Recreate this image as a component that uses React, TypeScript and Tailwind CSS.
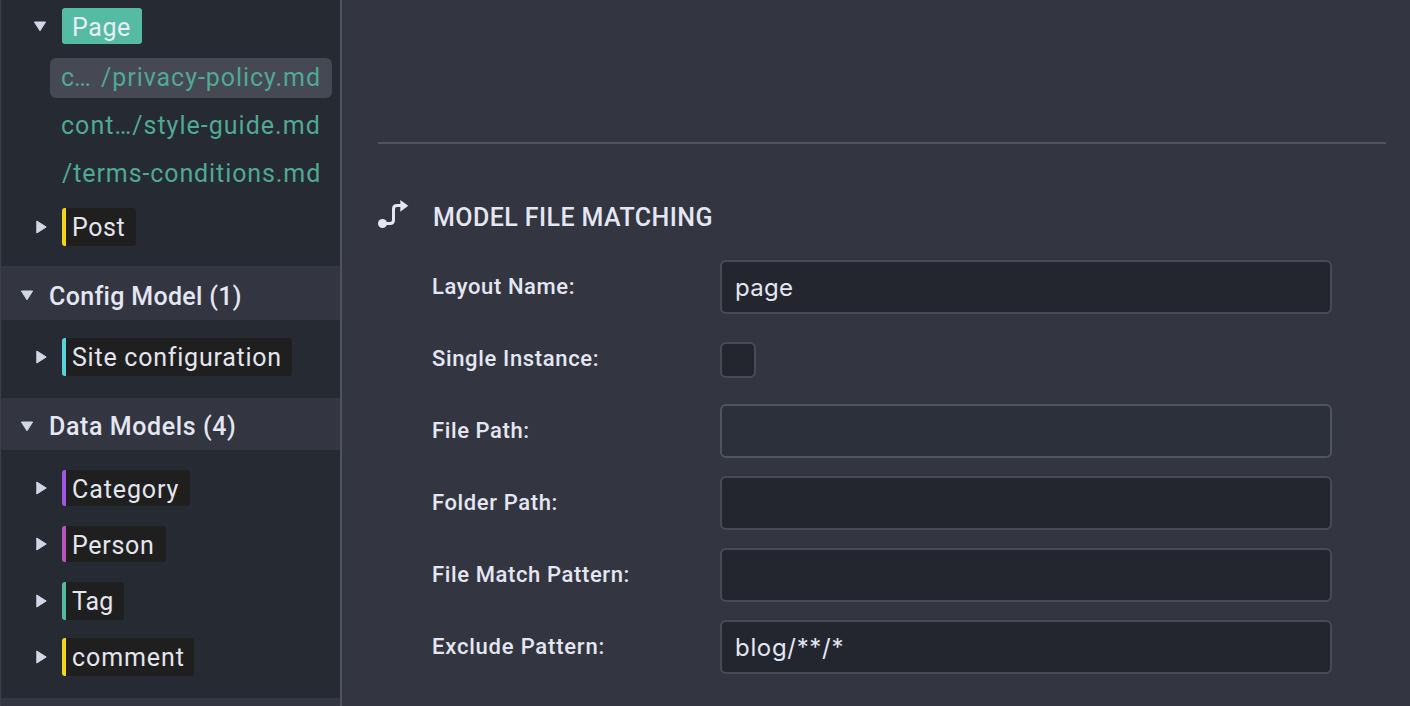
import React from "react";

function Arrow({ open = false }: { open?: boolean }) {
  return open ? (
    <svg width="14" height="11" viewBox="0 0 14 11" className="shrink-0">
      <path d="M1.4 1h11.2L7 9.8z" fill="#d3d7e5" stroke="#d3d7e5" strokeWidth="1" strokeLinejoin="round" />
    </svg>
  ) : (
    <svg width="11" height="14" viewBox="0 0 11 14" className="shrink-0">
      <path d="M.8 1v12L10.2 7z" fill="#d3d7e5" stroke="#d3d7e5" strokeWidth="1" strokeLinejoin="round" />
    </svg>
  );
}

function Chip({ label, className }: { label: string; className: string }) {
  return (
    <div className="flex items-center pl-[35px]">
      <div className="-mt-px w-[26px]">
        <Arrow />
      </div>
      <span className={`box-border block rounded-[3px] border-l-4 bg-[#1f1f1f] pl-1.5 text-[25px] whitespace-nowrap text-[#e4e6ef] ${className}`}>
        {label}
      </span>
    </div>
  );
}

function Group({ label, className, textClass }: { label: string; className: string; textClass: string }) {
  return (
    <div className={`flex items-center bg-[#333540] pl-[19px] font-medium text-[#e4e7f3] ${className}`}>
      <div className="w-[29px] pt-1">
        <Arrow open />
      </div>
      <span className={`text-[25px] leading-[30px] ${textClass}`}>{label}</span>
    </div>
  );
}

function Field({ label, labelClass, inputClass, value = "" }: { label: string; labelClass: string; inputClass: string; value?: string }) {
  return (
    <div className="flex h-[54px] items-center">
      <label className={`w-[288px] text-[22px] leading-7 font-medium whitespace-nowrap ${labelClass}`}>{label}</label>
      <div className={`flex h-[54px] w-[612px] items-center rounded-md border-2 pt-0.5 pl-[13px] font-[Inter] text-2xl text-[#e4e7f3] ${inputClass}`}>
        {value}
      </div>
    </div>
  );
}

export default function App() {
  return (
    <div className="flex h-[706px] w-[1410px] overflow-hidden bg-[#333540] font-[Roboto,sans-serif]">
      <aside className="w-[342px] shrink-0 border-r-2 border-l border-r-[#50535f] border-l-[#3b3e48] bg-[#262a33]">
        <div className="mt-2 flex h-9 items-center pl-8">
          <div className="w-[29px]">
            <Arrow open />
          </div>
          <span className="h-9 w-20 rounded-[3px] bg-[#55bba3] pt-0.5 pl-2.5 text-[25px] leading-9 tracking-[0.6px] text-[#e8edf7]">Page</span>
        </div>

        <div className="mt-3.5 mb-[11px] ml-[49px] w-[282px] text-[25px] whitespace-nowrap text-[#4fa994]">
          <div className="flex h-10 justify-between rounded-md bg-[#464853] pr-[11px] pl-[11px] leading-[39px]">
            <span className="tracking-[-0.2px]">c…</span>
            <span className="tracking-[0.95px]">/privacy-policy.md</span>
          </div>
          <div className="mt-2 h-10 pl-[11px] leading-[39px] tracking-[1.02px]">cont…/style-guide.md</div>
          <div className="mt-2 h-10 pl-3 leading-[39px] tracking-[0.9px]">/terms-conditions.md</div>
        </div>

        <div className="h-[61px] pt-[3px]">
          <Chip label="Post" className="h-[38px] w-[74px] border-[#f5d517] leading-[39px] tracking-[0.6px]" />
        </div>

        <Group label="Config Model (1)" className="h-[54px]" textClass="pt-[7px] tracking-[0.32px]" />
        <div className="h-[78px] pt-[18px]">
          <Chip label="Site configuration" className="h-[38px] w-[230px] border-[#56d3dc] leading-[39px] tracking-[0.76px]" />
        </div>

        <Group label="Data Models (4)" className="h-[52px]" textClass="pt-1.5 tracking-[0.6px]" />
        <div className="flex h-[248px] flex-col pt-5">
          <div className="h-14">
            <Chip label="Category" className="h-9 w-32 border-[#a056e3] pt-0.5 leading-9 tracking-[0.9px]" />
          </div>
          <div className="h-14">
            <Chip label="Person" className="h-9 w-[104px] border-[#b954be] pt-0.5 leading-9 tracking-[0.7px]" />
          </div>
          <div className="h-14">
            <Chip label="Tag" className="h-[38px] w-[62px] border-[#55bba0] leading-[39px]" />
          </div>
          <Chip label="comment" className="h-[38px] w-[132px] border-[#f5d517] leading-[39px] tracking-[0.9px]" />
        </div>
        <div className="h-2 bg-[#333540]" />
      </aside>

      <main className="flex-1 pt-[142px] pr-6 pl-9 text-[#e4e7f3]">
        <div className="h-0.5 bg-[#50535f]" />
        <div className="flex h-[90px] items-end">
          <svg width="31" height="30" viewBox="0 0 31 30" className="mb-1 shrink-0">
            <circle cx="4.5" cy="23.5" r="4.5" fill="#e4e7f3" />
            <path d="M4.5 23.5H12q3.5 0 3.5-3.5V9q0-3.5 3.5-3.5h5" fill="none" stroke="#e4e7f3" strokeWidth="3" />
            <path d="M22.3 0v11.7L30.3 5.8z" fill="#e4e7f3" />
          </svg>
          <h2 className="ml-6 text-[25px] leading-[32px] font-medium tracking-[0.42px] whitespace-nowrap">MODEL FILE MATCHING</h2>
        </div>
        <div className="mt-[26px] ml-[54px] flex flex-col gap-[18px]">
          <Field label="Layout Name:" labelClass="tracking-[0.6px]" inputClass="border-[#484b55] bg-[#23262f] tracking-[0.3px]" value="page" />
          <div className="flex h-[54px] items-center">
            <label className="w-[288px] text-[22px] leading-7 font-medium tracking-[0.65px]">Single Instance:</label>
            <div className="mt-0.5 size-9 rounded-md border-2 border-[#484b55] bg-[#23262f]" />
          </div>
          <Field label="File Path:" labelClass="tracking-[0.6px]" inputClass="border-[#50545f] bg-[#2c303a]" />
          <Field label="Folder Path:" labelClass="tracking-[0.62px]" inputClass="border-[#484b55] bg-[#23262f]" />
          <Field label="File Match Pattern:" labelClass="tracking-[0.62px]" inputClass="border-[#484b55] bg-[#23262f]" />
          <Field label="Exclude Pattern:" labelClass="tracking-[0.8px]" inputClass="border-[#484b55] bg-[#23262f] tracking-[0.68px]" value="blog/**/*" />
        </div>
      </main>
    </div>
  );
}
